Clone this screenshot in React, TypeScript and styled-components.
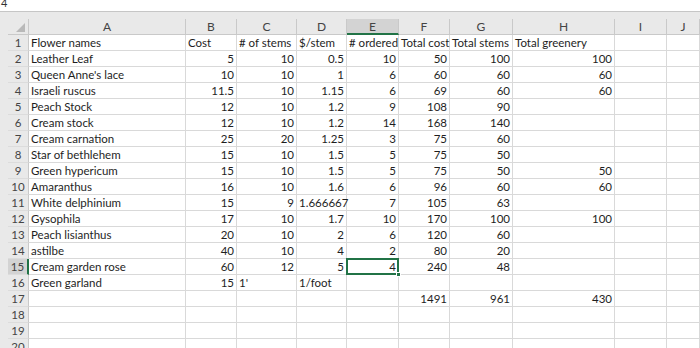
import styled, { createGlobalStyle } from 'styled-components';

const GlobalStyle = createGlobalStyle`
  html, body {
    margin: 0;
    padding: 0;
    background: #ffffff;
  }
  body {
    font-family: Lato, "Liberation Sans", sans-serif;
    overflow: hidden;
  }
`;

const COLUMNS = ['A', 'B', 'C', 'D', 'E', 'F', 'G', 'H', 'I', 'J'];
// row header + A..I, J takes the rest
const WIDTHS = [21, 157, 51, 60, 50, 52, 51, 63, 102, 52];

const ROWS: string[][] = [
  ['Flower names', 'Cost', '# of stems', '$/stem', '# ordered', 'Total cost', 'Total stems', 'Total greenery'],
  ['Leather Leaf', '5', '10', '0.5', '10', '50', '100', '100'],
  ["Queen Anne's lace", '10', '10', '1', '6', '60', '60', '60'],
  ['Israeli ruscus', '11.5', '10', '1.15', '6', '69', '60', '60'],
  ['Peach Stock', '12', '10', '1.2', '9', '108', '90'],
  ['Cream stock', '12', '10', '1.2', '14', '168', '140'],
  ['Cream carnation', '25', '20', '1.25', '3', '75', '60'],
  ['Star of bethlehem', '15', '10', '1.5', '5', '75', '50'],
  ['Green hypericum', '15', '10', '1.5', '5', '75', '50', '50'],
  ['Amaranthus', '16', '10', '1.6', '6', '96', '60', '60'],
  ['White delphinium', '15', '9', '1.666667', '7', '105', '63'],
  ['Gysophila', '17', '10', '1.7', '10', '170', '100', '100'],
  ['Peach lisianthus', '20', '10', '2', '6', '120', '60'],
  ['astilbe', '40', '10', '4', '2', '80', '20'],
  ['Cream garden rose', '60', '12', '5', '4', '240', '48'],
  ['Green garland', '15', "1'", '1/foot'],
  ['', '', '', '', '', '1491', '961', '430'],
  [],
  [],
  [],
];

const SELECTED_ROW = 15;
const SELECTED_COL = 'E';

const Page = styled.div`
  width: 700px;
  height: 348px;
  overflow: hidden;
  display: flex;
  flex-direction: column;
`;

const FormulaStrip = styled.div`
  height: 11px;
  flex: none;
  border-bottom: 1px solid #c6c6c6;
  background: #ffffff;
  color: #333;
  font-size: 11px;
  line-height: 6px;
  padding-left: 1px;
  overflow: hidden;
`;

const Frame = styled.div`
  flex: 1;
  background: #e9e9e9;
  padding: 7px 0 0 8px;
  overflow: hidden;
`;

const Sheet = styled.div`
  display: grid;
  grid-template-columns: ${WIDTHS.map((w) => `${w}px`).join(' ')} 1fr;
  grid-auto-rows: 16px;
  background: #ffffff;
  font-size: 11.5px;
  color: #1e1e1e;
`;

const Corner = styled.div`
  position: relative;
  background: #e9e9e9;
  border-right: 1px solid #c9c9c9;
  border-bottom: 1px solid #c9c9c9;

  &::after {
    content: '';
    position: absolute;
    right: 3px;
    bottom: 2px;
    width: 0;
    height: 0;
    border-left: 9px solid transparent;
    border-bottom: 9px solid #b9b9b9;
  }
`;

const ColHeader = styled.div<{ $active?: boolean }>`
  background: ${(p) => (p.$active ? '#d3d3d3' : '#e9e9e9')};
  border-right: 1px solid #c9c9c9;
  border-bottom: ${(p) => (p.$active ? '2px solid #217346' : '1px solid #c9c9c9')};
  color: #444;
  display: flex;
  align-items: center;
  justify-content: center;
  font-size: 12px;
`;

const RowHeader = styled.div<{ $active?: boolean }>`
  background: ${(p) => (p.$active ? '#d3d3d3' : '#e9e9e9')};
  border-right: ${(p) => (p.$active ? '2px solid #217346' : '1px solid #c9c9c9')};
  border-bottom: 1px solid #dcdcdc;
  color: #444;
  display: flex;
  align-items: center;
  justify-content: center;
  font-size: 11.5px;
`;

const Cell = styled.div<{ $numeric?: boolean; $selected?: boolean }>`
  position: relative;
  border-right: 1px solid #d9d9d9;
  border-bottom: 1px solid #d9d9d9;
  padding: 0 2px;
  white-space: nowrap;
  line-height: 16px;
  text-align: ${(p) => (p.$numeric ? 'right' : 'left')};
  min-width: 0;

  ${(p) =>
    p.$selected &&
    `
    &::before {
      content: '';
      position: absolute;
      top: -1px;
      left: -1px;
      right: -1px;
      bottom: -1px;
      border: 2px solid #217346;
      pointer-events: none;
    }
    &::after {
      content: '';
      position: absolute;
      right: -3px;
      bottom: -3px;
      width: 5px;
      height: 5px;
      background: #217346;
      border: 1px solid #ffffff;
      box-sizing: border-box;
      z-index: 1;
    }
  `}
`;

const isNumber = (v: string) => /^-?\d+(\.\d+)?$/.test(v);

export default function App() {
  return (
    <Page>
      <GlobalStyle />
      <FormulaStrip>4</FormulaStrip>
      <Frame>
        <Sheet>
          <Corner />
          {COLUMNS.map((c) => (
            <ColHeader key={c} $active={c === SELECTED_COL}>
              {c}
            </ColHeader>
          ))}
          {ROWS.map((row, r) => {
            const n = r + 1;
            return [
              <RowHeader key={`h${n}`} $active={n === SELECTED_ROW}>
                {n}
              </RowHeader>,
              ...COLUMNS.map((c, i) => {
                const v = row[i] ?? '';
                return (
                  <Cell
                    key={`${c}${n}`}
                    $numeric={isNumber(v)}
                    $selected={n === SELECTED_ROW && c === SELECTED_COL}
                  >
                    {v}
                  </Cell>
                );
              }),
            ];
          })}
        </Sheet>
      </Frame>
    </Page>
  );
}
